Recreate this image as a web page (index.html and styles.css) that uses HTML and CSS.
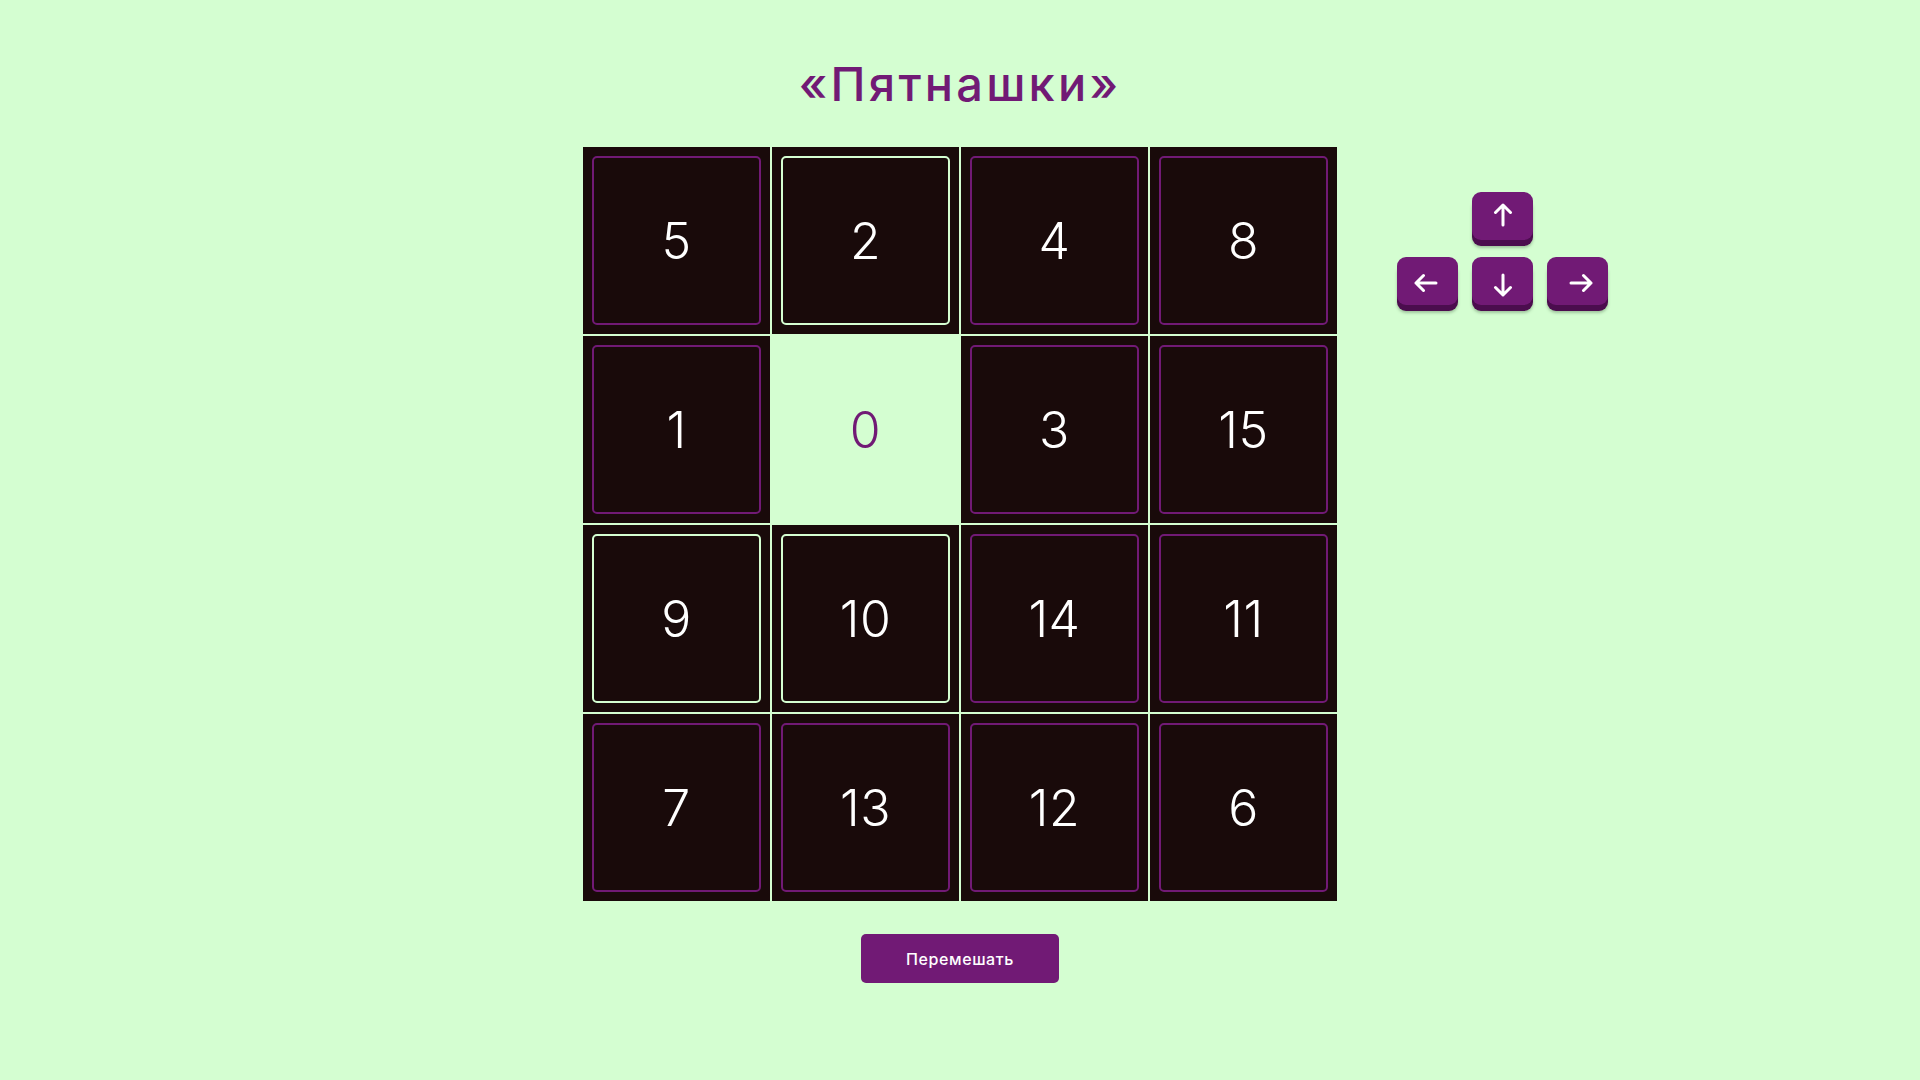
FILE: index.html
```html
<!DOCTYPE html>
<html lang="ru">
<head>
<meta charset="utf-8">
<title>Пятнашки</title>
<link rel="stylesheet" href="styles.css">
</head>
<body>
<main class="page">
  <h1 class="title">«Пятнашки»</h1>
  <div class="board-row">
    <div class="spacer"></div>
    <div class="board">
      <div class="tile"><div class="tile-inner">5</div></div>
      <div class="tile"><div class="tile-inner tile-inner--movable">2</div></div>
      <div class="tile"><div class="tile-inner">4</div></div>
      <div class="tile"><div class="tile-inner">8</div></div>
      <div class="tile"><div class="tile-inner">1</div></div>
      <div class="tile tile--empty"><div class="tile-inner">0</div></div>
      <div class="tile"><div class="tile-inner">3</div></div>
      <div class="tile"><div class="tile-inner">15</div></div>
      <div class="tile"><div class="tile-inner tile-inner--movable">9</div></div>
      <div class="tile"><div class="tile-inner tile-inner--movable">10</div></div>
      <div class="tile"><div class="tile-inner">14</div></div>
      <div class="tile"><div class="tile-inner">11</div></div>
      <div class="tile"><div class="tile-inner">7</div></div>
      <div class="tile"><div class="tile-inner">13</div></div>
      <div class="tile"><div class="tile-inner">12</div></div>
      <div class="tile"><div class="tile-inner">6</div></div>
    </div>
    <div class="controls">
      <div class="keys">
        <button class="key key--up" aria-label="Вверх">
          <svg class="arrow arrow--up" viewBox="0 0 24 24" width="24" height="24"><path d="M12 22V2M4.5 9.5L12 2l7.5 7.5"/></svg>
        </button>
        <button class="key key--left" aria-label="Влево">
          <svg class="arrow arrow--left" viewBox="0 0 24 24" width="24" height="24"><path d="M22 12H2M9.5 4.5L2 12l7.5 7.5"/></svg>
        </button>
        <button class="key key--down" aria-label="Вниз">
          <svg class="arrow arrow--down" viewBox="0 0 24 24" width="24" height="24"><path d="M12 2v20M4.5 14.5L12 22l7.5-7.5"/></svg>
        </button>
        <button class="key key--right" aria-label="Вправо">
          <svg class="arrow arrow--right" viewBox="0 0 24 24" width="24" height="24"><path d="M2 12h20M14.5 4.5L22 12l-7.5 7.5"/></svg>
        </button>
      </div>
    </div>
  </div>
  <button class="shuffle">Перемешать</button>
</main>
</body>
</html>
```
FILE: styles.css
```css
html, body {
  margin: 0;
  padding: 0;
}

body {
  background: #d4fed1;
  font-family: "Inter", "Noto Sans", sans-serif;
  min-height: 1080px;
}

.page {
  display: flex;
  flex-direction: column;
  align-items: center;
}

.title {
  margin: 55px 0 34px;
  font-size: 47px;
  line-height: 58px;
  font-weight: 500;
  color: #711a75;
  letter-spacing: 3.2px;
}

.board-row {
  width: 100%;
  display: grid;
  grid-template-columns: 1fr auto 1fr;
}

.board {
  display: grid;
  grid-template-columns: repeat(4, 187px);
  grid-auto-rows: 187px;
  gap: 2px;
}

.tile {
  background: #190a0a;
  padding: 9px;
}

.tile-inner {
  height: 100%;
  box-sizing: border-box;
  border: 2px solid #711a75;
  border-radius: 5px;
  display: flex;
  align-items: center;
  justify-content: center;
  color: #ffffff;
  font-size: 50px;
  font-weight: 300;
  letter-spacing: 0.5px;
}

.tile-inner--movable {
  border-color: #d4fed1;
}

.tile--empty {
  background: transparent;
}

.tile--empty .tile-inner {
  border-color: transparent;
  color: #711a75;
}

.controls {
  padding: 45px 0 0 60px;
}

.keys {
  display: grid;
  grid-template-columns: repeat(3, 61px);
  grid-template-rows: 48px 48px;
  column-gap: 14px;
  row-gap: 17px;
}

.key {
  border: none;
  padding: 0;
  margin: 0;
  background: #711a75;
  border-radius: 9px;
  box-shadow: 0 6px 0 #4b0d4e, 0 8px 3px rgba(60, 90, 60, 0.35);
  display: flex;
  align-items: center;
  justify-content: center;
  cursor: pointer;
}

.key--up { grid-column: 2; grid-row: 1; }
.key--left { grid-column: 1; grid-row: 2; }
.key--down { grid-column: 2; grid-row: 2; }
.key--right { grid-column: 3; grid-row: 2; }

.arrow {
  fill: none;
  stroke: #ffffff;
  stroke-width: 3;
  stroke-linecap: round;
  stroke-linejoin: round;
}

.arrow--up { margin-top: -2px; }
.arrow--down { margin-top: 8px; }
.arrow--left { margin: 4px 4px 0 0; }
.arrow--right { margin: 4px 0 0 6px; }

.shuffle {
  margin-top: 33px;
  width: 198px;
  height: 49px;
  border: none;
  border-radius: 5px;
  background: #711a75;
  color: #ffffff;
  font-family: "Inter", "Noto Sans", sans-serif;
  font-size: 16px;
  font-weight: 500;
  letter-spacing: 0.6px;
  cursor: pointer;
}
```
